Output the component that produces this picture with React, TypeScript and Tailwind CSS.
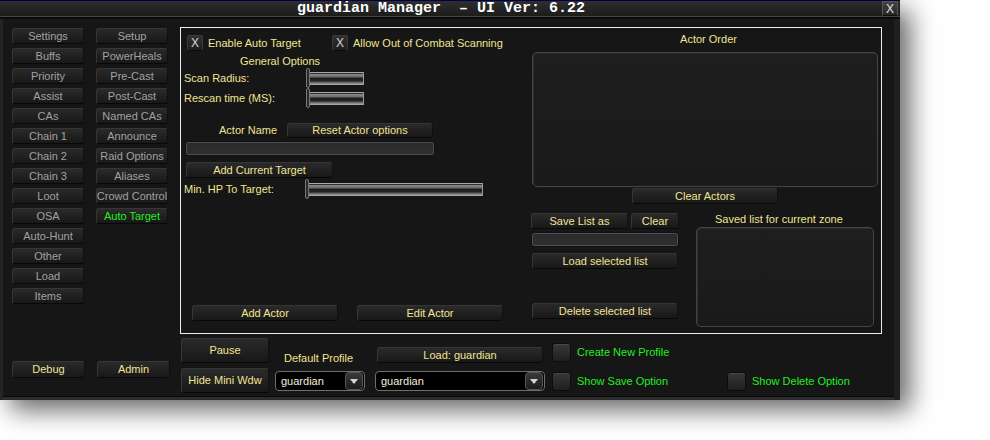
import React from "react";

const YEL = "text-[#f2e492]";
const GRN = "text-[#22ee22]";
const NAV = "text-[#a2a2a2]";

function Btn({
  className = "",
  color = YEL,
  children,
}: {
  className?: string;
  color?: string;
  children: React.ReactNode;
}) {
  return (
    <div
      className={
        "flex shrink-0 items-center justify-center whitespace-nowrap rounded-[3px] border border-[#363636] border-b-[#080808] border-r-[#101010] bg-linear-to-b from-[#2a2a2a] to-[#181818] text-[11px] leading-none " +
        color +
        " " +
        className
      }
    >
      {children}
    </div>
  );
}

function XBox() {
  return (
    <div className="flex h-[16px] w-[16px] shrink-0 items-center justify-center rounded-[2px] border border-[#3a3a3a] border-b-[#0a0a0a] bg-linear-to-b from-[#303030] to-[#1e1e1e] text-[12px] leading-none text-[#d4d4d4]">
      X
    </div>
  );
}

function CheckSq() {
  return (
    <div className="h-[19px] w-[19px] shrink-0 rounded-[3px] border border-[#0c0c0c] bg-linear-to-b from-[#383838] to-[#1f1f1f] shadow-[inset_0_1px_0_#454545]" />
  );
}

function Slider({ track }: { track: string }) {
  return (
    <div className="flex items-center">
      <div className="h-[20px] w-[4px] shrink-0 rounded-full border border-[#787878] bg-[#2a2a2a]" />
      <div
        className={
          "h-[13px] shrink-0 border-r border-r-[#9a9a9a] bg-[linear-gradient(to_bottom,#a8a8a8_0px,#a8a8a8_1px,#303030_1px,#303030_2px,#8c8c8c_2px,#6c6c6c_5px,#1c1c1c_6px,#262626_9px,#5a5a5a_10px,#9a9a9a_12px,#b0b0b0_13px)] " +
          track
        }
      />
    </div>
  );
}

function Field({ className }: { className: string }) {
  return (
    <div
      className={
        "rounded-[3px] border border-[#10101c] bg-linear-to-b from-[#2a2a2a] to-[#303030] shadow-[inset_0_0_0_1px_#4d4d4d] " +
        className
      }
    />
  );
}

function ListBox({ className }: { className: string }) {
  return (
    <div
      className={
        "rounded-[5px] border border-[#454545] bg-linear-to-b from-[#1e1e1e] to-[#1a1a1a] shadow-[inset_1px_1px_0_#2c2c2c] " +
        className
      }
    />
  );
}

function Combo({ className }: { className: string }) {
  return (
    <div
      className={
        "flex items-center justify-between rounded-[4px] border border-[#6e6e6e] bg-black pl-[5px] pr-[1px] " +
        className
      }
    >
      <span className="text-[11px] leading-none text-[#f3efd8]">guardian</span>
      <div className="flex h-[18px] w-[18px] items-center justify-center rounded-[4px] border border-[#555] bg-linear-to-b from-[#3a3a3a] to-[#1c1c1c]">
        <div className="h-0 w-0 border-l-[4px] border-r-[4px] border-t-[5px] border-l-transparent border-r-transparent border-t-[#d6d6d6]" />
      </div>
    </div>
  );
}

const navRows: [string, string | null, boolean?][] = [
  ["Settings", "Setup"],
  ["Buffs", "PowerHeals"],
  ["Priority", "Pre-Cast"],
  ["Assist", "Post-Cast"],
  ["CAs", "Named CAs"],
  ["Chain 1", "Announce"],
  ["Chain 2", "Raid Options"],
  ["Chain 3", "Aliases"],
  ["Loot", "Crowd Control"],
  ["OSA", "Auto Target", true],
  ["Auto-Hunt", null],
  ["Other", null],
  ["Load", null],
  ["Items", null],
];

export default function App() {
  return (
    <div className="h-[440px] w-[990px] overflow-hidden bg-white font-['Liberation_Sans',Arial,sans-serif]">
      <div className="flex h-[400px] w-[900px] flex-col bg-[#161616] shadow-[10px_10px_24px_rgba(0,0,0,0.6)]">
        {/* title bar */}
        <div className="flex h-[16px] shrink-0 items-center border-t border-t-[#00004a] bg-linear-to-b from-[#2e2e2e] to-[#1c1c1c]">
          <div className="whitespace-pre pl-[297px] font-['Liberation_Mono',monospace] text-[15px] font-bold leading-[15px] text-white">
            {"guardian Manager  \u2013 UI Ver: 6.22"}
          </div>
          <div className="ml-auto mr-[2px] flex h-[15px] w-[16px] items-center justify-center border border-[#555] border-b-[#111] bg-linear-to-b from-[#444] to-[#262626] text-[12px] leading-none text-[#e0e0e0]">
            X
          </div>
        </div>
        <div className="h-[1px] shrink-0 bg-[#444]" />
        <div className="h-[2px] shrink-0 bg-[#0b0b0b]" />

        {/* body */}
        <div className="flex min-h-0 flex-1 shadow-[inset_3px_0_0_#242424,inset_-6px_0_0_#1f1f1f,inset_0_-3px_0_#2c2c2c,inset_0_-4px_0_#090909]">
          {/* left nav */}
          <div className="flex w-[180px] shrink-0 flex-col pb-[22px] pl-[12px] pt-[9px]">
            <div className="flex flex-col gap-[4px]">
              {navRows.map(([a, b, g]) => (
                <div key={a} className="flex gap-[12px]">
                  <Btn color={NAV} className="h-[16px] w-[72px]">
                    {a}
                  </Btn>
                  {b && (
                    <Btn color={g ? GRN : NAV} className="h-[16px] w-[72px]">
                      {b}
                    </Btn>
                  )}
                </div>
              ))}
            </div>
            <div className="mt-auto flex gap-[12px]">
              <Btn className="h-[17px] w-[73px]">Debug</Btn>
              <Btn className="h-[17px] w-[73px]">Admin</Btn>
            </div>
          </div>

          {/* right area */}
          <div className="flex flex-col pt-[8px]">
            {/* main panel */}
            <div className="flex h-[307px] w-[702px] border border-[#efefef]">
              {/* panel left */}
              <div className="flex w-[349px] shrink-0 flex-col">
                <div className="mt-[7px] flex h-[16px] items-center pl-[6px]">
                  <div className="flex w-[145px] items-center gap-[5px]">
                    <XBox />
                    <span className={"whitespace-nowrap text-[11px] " + YEL}>Enable Auto Target</span>
                  </div>
                  <div className="flex items-center gap-[5px]">
                    <XBox />
                    <span className={"whitespace-nowrap text-[11px] " + YEL}>
                      Allow Out of Combat Scanning
                    </span>
                  </div>
                </div>
                <div className={"mt-[4px] h-[13px] pl-[59px] text-[11px] leading-[13px] " + YEL}>
                  General Options
                </div>
                <div className="flex h-[20px] items-center pl-[3px]">
                  <span className={"w-[122px] text-[11px] " + YEL}>Scan Radius:</span>
                  <Slider track="w-[54px]" />
                </div>
                <div className="flex h-[20px] items-center pl-[3px]">
                  <span className={"w-[122px] text-[11px] " + YEL}>Rescan time (MS):</span>
                  <Slider track="w-[54px]" />
                </div>
                <div className="mt-[15px] flex h-[15px] items-center">
                  <span className={"ml-[38px] w-[68px] text-[11px] " + YEL}>Actor Name</span>
                  <Btn className="h-[15px] w-[146px]">Reset Actor options</Btn>
                </div>
                <Field className="ml-[4px] mt-[3px] h-[15px] w-[250px]" />
                <Btn className="ml-[5px] mt-[6px] h-[16px] w-[147px]">Add Current Target</Btn>
                <div className="mt-[1px] flex h-[20px] items-center pl-[3px]">
                  <span className={"w-[121px] text-[11px] " + YEL}>Min. HP To Target:</span>
                  <Slider track="w-[174px]" />
                </div>
                <div className="mb-[12px] ml-[11px] mt-auto flex gap-[19px]">
                  <Btn className="h-[16px] w-[146px]">Add Actor</Btn>
                  <Btn className="h-[16px] w-[146px]">Edit Actor</Btn>
                </div>
              </div>

              {/* panel right */}
              <div className="flex flex-1 flex-col">
                <div className={"mt-[5px] h-[13px] pl-[6px] text-center text-[11px] leading-[13px] " + YEL}>
                  Actor Order
                </div>
                <ListBox className="ml-[2px] mt-[6px] h-[135px] w-[346px]" />
                <Btn className="ml-[102px] mt-[1px] h-[16px] w-[146px]">Clear Actors</Btn>
                <div className="mt-[9px] flex">
                  <div className="ml-[1px] flex w-[148px] flex-col">
                    <div className="flex gap-[3px]">
                      <Btn className="h-[16px] w-[97px]">Save List as</Btn>
                      <Btn className="h-[16px] w-[48px]">Clear</Btn>
                    </div>
                    <Field className="mt-[3px] h-[15px] w-[148px]" />
                    <Btn className="ml-[1px] mt-[6px] h-[16px] w-[146px]">Load selected list</Btn>
                    <Btn className="ml-[1px] mt-[34px] h-[16px] w-[146px]">Delete selected list</Btn>
                  </div>
                  <div className="ml-[17px] flex flex-col">
                    <div className={"h-[13px] whitespace-nowrap pl-[19px] text-[11px] leading-[13px] " + YEL}>
                      Saved list for current zone
                    </div>
                    <ListBox className="mt-[1px] h-[100px] w-[178px]" />
                  </div>
                </div>
              </div>
            </div>

            {/* bottom row */}
            <div className="flex items-start">
              <div className="ml-[1px] mt-[4px] flex flex-col gap-[5px]">
                <Btn className="h-[25px] w-[88px]">Pause</Btn>
                <Btn className="h-[25px] w-[88px]">Hide Mini Wdw</Btn>
              </div>
              <div className="ml-[6px] flex flex-col">
                <div className={"mt-[18px] h-[13px] whitespace-nowrap pl-[9px] text-[11px] leading-[13px] " + YEL}>
                  Default Profile
                </div>
                <Combo className="mt-[6px] h-[20px] w-[90px]" />
              </div>
              <div className="ml-[10px] flex flex-col">
                <Btn className="ml-[2px] mt-[13px] h-[16px] w-[166px]">Load: guardian</Btn>
                <Combo className="mt-[8px] h-[20px] w-[170px]" />
              </div>
              <div className="ml-[7px] flex flex-col">
                <div className="mt-[9px] flex items-center gap-[6px]">
                  <CheckSq />
                  <span className={"whitespace-nowrap text-[11px] " + GRN}>Create New Profile</span>
                </div>
                <div className="mt-[10px] flex items-center">
                  <div className="flex w-[175px] items-center gap-[6px]">
                    <CheckSq />
                    <span className={"whitespace-nowrap text-[11px] " + GRN}>Show Save Option</span>
                  </div>
                  <div className="flex items-center gap-[6px]">
                    <CheckSq />
                    <span className={"whitespace-nowrap text-[11px] " + GRN}>Show Delete Option</span>
                  </div>
                </div>
              </div>
            </div>
          </div>
        </div>
      </div>
    </div>
  );
}
